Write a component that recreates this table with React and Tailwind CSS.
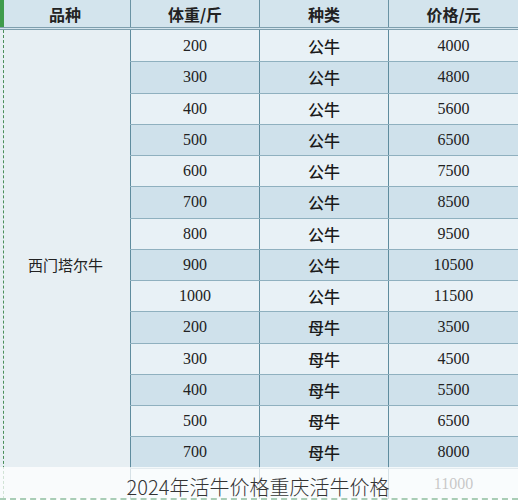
import React from "react";

const rows = [
  ["200", "公牛", "4000"],
  ["300", "公牛", "4800"],
  ["400", "公牛", "5600"],
  ["500", "公牛", "6500"],
  ["600", "公牛", "7500"],
  ["700", "公牛", "8500"],
  ["800", "公牛", "9500"],
  ["900", "公牛", "10500"],
  ["1000", "公牛", "11500"],
  ["200", "母牛", "3500"],
  ["300", "母牛", "4500"],
  ["400", "母牛", "5500"],
  ["500", "母牛", "6500"],
  ["700", "母牛", "8000"],
  ["", "", "11000"],
];

const cjk = "font-['Noto_Sans_CJK_SC',sans-serif]";
const num = "font-['Liberation_Serif','Noto_Sans_CJK_SC',serif]";

export default function App() {
  return (
    <div className="relative w-[518px] h-[500px] overflow-hidden bg-white">
      {/* header */}
      <div className={`grid grid-cols-[130px_129px_129px_130px] h-[30px] bg-[#d3e4ed] border-b-[3px] border-double border-b-[#7e9fae] text-[16px] font-bold text-[#222] ${cjk}`}>
        <div className="flex items-center justify-center border-l-4 border-l-[#3f9c4c] pr-1">品种</div>
        <div className="flex items-center justify-center border-l border-l-[#6a93a4]">体重/斤</div>
        <div className="flex items-center justify-center border-l border-l-[#6a93a4]">种类</div>
        <div className="flex items-center justify-center border-l border-l-[#6a93a4]">价格/元</div>
      </div>
      {/* body */}
      <div className="grid grid-cols-[130px_388px]">
        <div className="flex bg-[#e7eff3] pl-[3px]">
          <div className={`flex-1 flex items-center justify-center pr-[3px] pt-[2px] border-l border-dashed border-l-[#4a8f5a] text-[15px] text-[#222] ${cjk}`}>
            西门塔尔牛
          </div>
        </div>
        <div className="flex flex-col">
          {rows.map((r, i) => (
            <div
              key={i}
              className={`grid grid-cols-[129px_129px_130px] h-[31.25px] border-t border-t-[#8fb0bf] first:border-t-0 ${
                i % 2 === 0 ? "bg-[#e8f1f6]" : "bg-[#cfe1eb]"
              }`}
            >
              <div className={`flex items-center justify-center border-l border-l-[#5f8c9e] text-[16px] text-[#222] ${num}`}>{r[0]}</div>
              <div className={`flex items-center justify-center border-l border-l-[#5f8c9e] text-[16px] font-medium text-[#1a1a1a] ${cjk}`}>{r[1]}</div>
              <div className={`flex items-center justify-center border-l border-l-[#5f8c9e] text-[16px] text-[#222] ${num}`}>{r[2]}</div>
            </div>
          ))}
        </div>
      </div>
      {/* caption overlay */}
      <div className="absolute left-0 right-0 bottom-0 h-[33px] bg-white/75 border-b-2 border-dashed border-b-[#a9cdb6] flex items-end justify-center">
        <span className={`text-[20px] leading-[26px] translate-y-[2px] text-[#333] font-light pr-[2px] ${cjk}`}>2024年活牛价格重庆活牛价格</span>
      </div>
    </div>
  );
}
